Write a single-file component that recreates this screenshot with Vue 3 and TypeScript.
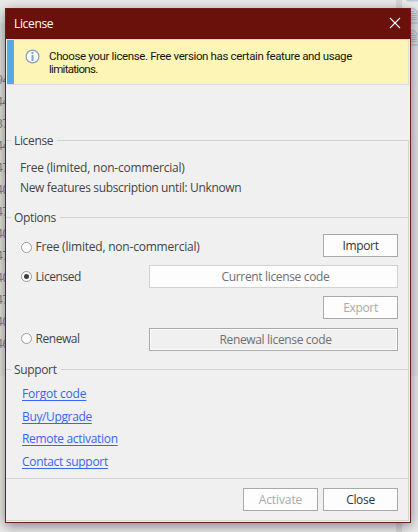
<script setup lang="ts">
interface SupportLink { label: string; cls: string }

const rowCodes: string[] = ['94', '44', '37', '44', '47', '40', '47', '40', '47', '40', '47', '40', '46']
const links: SupportLink[] = [
  { label: 'Forgot code', cls: 'forgot' },
  { label: 'Buy/Upgrade', cls: 'buy' },
  { label: 'Remote activation', cls: 'remote' },
  { label: 'Contact support', cls: 'contact' },
]
</script>

<template>
  <div class="desktop">
    <div class="codes">
      <span v-for="(code, i) in rowCodes" :key="i">{{ code }}</span>
    </div>
    <div class="back-edge"></div>
    <svg class="back-icons" width="19" height="50" viewBox="0 0 19 50">
      <rect x="7" y="-6" width="20" height="7.500" rx="3" fill="#bccbdb" />
      <g v-for="y in [8, 30]" :key="y" :transform="`translate(0 ${y})`">
        <path d="M8 .5H15L19 4.500V15H8Z" fill="#d9dde0" />
        <path d="M8 .5H15L19 4.500M8 15H19" fill="none" stroke="#b3c9e2" stroke-width="1.400" />
        <path d="M10 3.500H15M10 5.500H18M10 7.500H18M10 9.500H18M10 11.500H18" stroke="#b4babf" />
      </g>
    </svg>

    <section class="dialog">
      <header class="titlebar">
        <span class="title">License</span>
        <svg class="close" width="12" height="12" viewBox="0 0 12 12"><path d="M1 1L11 11M11 1L1 11" /></svg>
      </header>

      <div class="banner">
        <svg class="info" width="15" height="15" viewBox="0 0 15 15">
          <circle cx="7.500" cy="7.500" r="6.400" fill="#fbfcf8" stroke="#7c9fc3" stroke-width="1.200" />
          <path d="M7.500 3V5M7.500 6V12" stroke="#84a4c8" stroke-width="2" />
        </svg>
        <p><span class="b1">Choose your license. Free version has certain feature and usage</span><br><span class="b2">limitations.</span></p>
      </div>

      <main class="content">
        <div class="group first"><span class="name">License</span></div>
        <div class="details">
          <p class="free">Free (limited, non-commercial)</p>
          <p class="until">New features subscription until: Unknown</p>
        </div>

        <div class="group"><span class="name options">Options</span></div>
        <div class="choices">
          <div class="choice c1">
            <i class="radio"></i><span class="label free">Free (limited, non-commercial)</span>
            <button class="btn"><span>Import</span></button>
          </div>
          <div class="choice c2">
            <i class="radio on"></i><span class="label">Licensed</span>
            <button class="btn wide current"><span>Current license code</span></button>
          </div>
          <div class="choice c3">
            <button class="btn disabled"><span>Export</span></button>
          </div>
          <div class="choice c4">
            <i class="radio"></i><span class="label">Renewal</span>
            <button class="btn wide renewal"><span>Renewal license code</span></button>
          </div>
        </div>

        <div class="group"><span class="name support">Support</span></div>
        <nav class="links">
          <a v-for="link in links" :key="link.label" :class="link.cls">{{ link.label }}</a>
        </nav>
      </main>

      <footer class="footer">
        <button class="btn disabled activate"><span>Activate</span></button>
        <button class="btn"><span>Close</span></button>
      </footer>
    </section>
  </div>
</template>

<style>
body { margin: 0; overflow: hidden; }
</style>

<style scoped>
* { box-sizing: border-box; }
p { margin: 0; }
.desktop {
  position: relative;
  width: 418px;
  height: 532px;
  padding: 8px 0 0 5px;
  overflow: hidden;
  background: linear-gradient(#ebebeb 0 23px, #e2e2e2 23px 376px, #ebebeb 376px);
  font: 12px/16px "Open Sans", "Noto Sans", sans-serif;
  color: #444;
}
.codes {
  position: absolute;
  left: -4px;
  top: 69px;
  width: 14px;
  display: flex;
  flex-direction: column;
  color: #7c7f86;
  letter-spacing: -.4px;
}
.codes span { height: 22px; line-height: 22px; }
.back-edge { position: absolute; left: 396px; top: 0; width: 6px; height: 532px; background: #d8d8d8; }
.back-icons { position: absolute; left: 399px; top: 0; }
.dialog {
  position: relative;
  display: flex;
  flex-direction: column;
  width: 406px;
  height: 515px;
  border: 1px solid #6e1d18;
  background: #f0f0f0;
  box-shadow: 0 3px 12px rgba(0, 0, 0, .45);
}
.titlebar {
  display: flex;
  align-items: center;
  justify-content: space-between;
  height: 30px;
  padding: 0 9px 0 8px;
  background: #6a110b;
  color: #fff;
  letter-spacing: -.35px;
}
.close { margin-bottom: 2px; }
.close path { fill: none; stroke: #fff; stroke-width: 1.1; }
.banner {
  display: flex;
  height: 46px;
  margin: 0 1px;
  padding: 10px 0 0 11px;
  border: solid #dcdcdc;
  border-width: 1px 1px 1px 0;
  background: linear-gradient(90deg, #55aae5 7px, #fcf5b5 7px);
  color: #151515;
  font: 11.5px/13px Roboto, "Liberation Sans", sans-serif;
}
.banner p { margin-left: 9px; white-space: nowrap; }
.b1 { letter-spacing: -.36px; }
.b2 { letter-spacing: -.7px; }
.info { margin-left: 7px; flex: none; margin-top: -1px; }
.content { display: flex; flex-direction: column; height: 338px; margin: 55px 1px 0 0; border-right: 1px solid #d4d4d4; }
.group { display: flex; align-items: center; height: 17px; line-height: 17px; gap: 4px; letter-spacing: -.35px; }
.group.first { margin-top: -8px; }
.group::before, .group::after { content: ""; height: 1px; background: #d2d2d2; }
.group::before { width: 5px; margin-right: -1px; }
.group::after { flex: 1; }
.details { height: 60px; padding: 9px 0 0 14px; line-height: 20px; }
.free { letter-spacing: -.2px; }
.until { letter-spacing: -.34px; }
.choices { display: flex; flex-direction: column; height: 135px; padding: 8px 10px 0 15px; }
.choice { display: flex; align-items: center; height: 23px; }
.c2, .c3 { margin-top: 8px; }
.c4 { margin-top: 9px; }
.choice .btn { margin-left: auto; }
.radio { display: grid; place-items: center; width: 11px; height: 11px; border: 1px solid #9a9a9a; border-radius: 50%; background: #fff; }
.radio.on::after { content: ""; width: 5px; height: 5px; border-radius: 50%; background: #3c3c3c; }
.label { margin-left: 3.5px; letter-spacing: -.45px; }
.label.free { letter-spacing: -.22px; }
.c1 .radio { margin-top: 4px; }
.c1 .label { margin-top: 3px; }
.c4 .radio, .c4 .label { margin-bottom: 2px; }
.btn {
  width: 75px;
  height: 23px;
  padding: 0;
  border: 1px solid #a9a9a9;
  border-radius: 0;
  background: #fdfdfd;
  color: #333;
  font: inherit;
  line-height: 21px;
  letter-spacing: -.33px;
}
.btn.disabled { color: #aaa; }
.btn.activate { letter-spacing: -.1px; }
.btn.wide { width: 249px; padding: 1px 0 0 4px; line-height: 20px; color: #6f6f6f; letter-spacing: -.34px; }
.btn.current { border-color: #d2d2d2; }
.btn.renewal { background: #f0f0f0; box-shadow: inset 0 0 0 1px #fcfcfc; }
.links { display: flex; flex-direction: column; align-items: flex-start; padding: 5px 0 0 16px; line-height: 22.7px; letter-spacing: -.3px; }
.links a { color: #3566f5; text-decoration: underline; text-underline-offset: 2px; text-decoration-thickness: 1px; text-decoration-skip-ink: none; }
.links .forgot { letter-spacing: -.2px; }
.links .buy { letter-spacing: -.36px; }
.footer { display: flex; justify-content: flex-end; gap: 5px; height: 43px; margin-right: 1px; padding: 9px 10px 0 0; border: solid #d4d4d4; border-width: 1px 1px 1px 0; }
</style>
